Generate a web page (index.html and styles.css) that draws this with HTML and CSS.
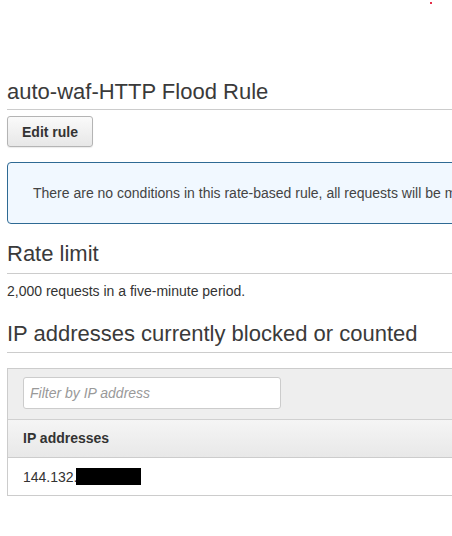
FILE: index.html
```html
<!DOCTYPE html>
<html>
<head>
<meta charset="utf-8">
<link rel="stylesheet" href="styles.css">
</head>
<body>
<span class="dot"></span>
<div class="page">
  <h1 class="heading">auto-waf-HTTP Flood Rule</h1>
  <button class="btn">Edit rule</button>
  <div class="info">There are no conditions in this rate-based rule, all requests will be m</div>
  <h2 class="heading heading-section">Rate limit</h2>
  <p class="desc">2,000 requests in a five-minute period.</p>
  <h2 class="heading heading-section heading-ip">IP addresses currently blocked or counted</h2>
  <div class="table">
    <div class="filter-bar">
      <input class="filter" type="text" placeholder="Filter by IP address">
    </div>
    <div class="th">IP addresses</div>
    <div class="td">144.132.<span class="redact"></span></div>
  </div>
</div>
</body>
</html>
```
FILE: styles.css
```css
html, body {
  margin: 0;
  padding: 0;
  background: #fff;
  overflow: hidden;
}
body {
  font-family: "Liberation Sans", Arial, sans-serif;
  color: #333;
  width: 452px;
  height: 536px;
  position: relative;
}
.dot {
  position: absolute;
  left: 430px;
  top: 2px;
  width: 2px;
  height: 2px;
  background: #e4304a;
}
.page {
  width: 760px;
  padding: 79px 0 0 7px;
}
.heading {
  margin: 0;
  font-size: 22px;
  line-height: 26px;
  font-weight: normal;
  color: #3a3a3a;
  padding-bottom: 4px;
  border-bottom: 1px solid #ccc;
}
.btn {
  display: block;
  margin-top: 6px;
  height: 31px;
  padding: 0 14px;
  font-family: inherit;
  font-size: 14px;
  font-weight: bold;
  color: #333;
  border: 1px solid #b4b4b4;
  border-radius: 3px;
  background: linear-gradient(#fafafa, #e7e7e7);
  box-shadow: 0 1px 1px rgba(0,0,0,0.08);
}
.info {
  margin-top: 15px;
  border: 1px solid #2e6a94;
  border-radius: 4px;
  background: #f1f8ff;
  padding: 20px 25px;
  font-size: 14px;
  line-height: 20px;
  color: #444;
  white-space: nowrap;
}
.heading-section {
  margin-top: 17px;
  padding-bottom: 6px;
}
.desc {
  margin: 0;
  padding-top: 9px;
  font-size: 14px;
  line-height: 16px;
  color: #333;
}
.heading-ip {
  margin-top: 22px;
  padding-bottom: 5px;
}
.table {
  margin-top: 15px;
  border: 1px solid #ccc;
  border-right: none;
}
.filter-bar {
  background: #eee;
  padding: 8px 15px 10px;
  border-bottom: 1px solid #d0d0d0;
}
.filter {
  display: block;
  box-sizing: border-box;
  width: 258px;
  height: 32px;
  border: 1px solid #ccc;
  border-radius: 3px;
  padding: 0 6px;
  font-family: inherit;
  font-size: 14px;
  font-style: italic;
  color: #333;
  background: #fff;
}
.filter::placeholder {
  color: #999;
  font-style: italic;
}
.th {
  height: 37px;
  line-height: 37px;
  padding-left: 15px;
  font-size: 14px;
  font-weight: bold;
  color: #333;
  background: linear-gradient(#f5f5f5, #e8e8e8);
  border-bottom: 1px solid #ccc;
}
.td {
  height: 37px;
  padding-left: 15px;
  font-size: 14px;
  color: #333;
  display: flex;
  align-items: center;
}
.redact {
  display: inline-block;
  width: 65px;
  height: 17px;
  margin-left: -2px;
  background: #000;
}
```
